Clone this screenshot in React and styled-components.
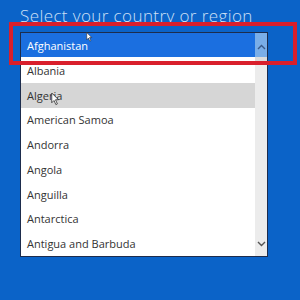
import React from "react";
import styled, { createGlobalStyle } from "styled-components";

const Global = createGlobalStyle`
  html, body { margin: 0; padding: 0; }
  body { background: #0b63c8; }
`;

const countries = [
  "Albania",
  "Algeria",
  "American Samoa",
  "Andorra",
  "Angola",
  "Anguilla",
  "Antarctica",
  "Antigua and Barbuda",
];

const pointer = "M1 1 L1 14 L4 11 L6.5 16.5 L8.5 15.5 L6 10 L10 10 Z";

const App = () => {
  return (
    <Page>
      <Global />
      <Title>Select your country or region</Title>
      <ListBox>
        <Rows>
          <Selected>Afghanistan</Selected>
          <Gap />
          {countries.map((c) => (
            <Row key={c} hover={c === "Algeria"}>
              {c}
              {c === "Algeria" && (
                <Cursor viewBox="0 0 12 18" width="9" height="14">
                  <path d={pointer} fill="#fff" stroke="#222" strokeWidth="1" />
                </Cursor>
              )}
            </Row>
          ))}
        </Rows>
        <ScrollBar>
          <ScrollTop>
            <svg width="9" height="6" viewBox="0 0 9 6">
              <path d="M1 5 L4.5 1.5 L8 5" fill="none" stroke="#3a5a8a" strokeWidth="1.4" />
            </svg>
          </ScrollTop>
          <Track />
          <ScrollBottom>
            <svg width="9" height="6" viewBox="0 0 9 6">
              <path d="M1 1 L4.5 4.5 L8 1" fill="none" stroke="#555" strokeWidth="1.4" />
            </svg>
          </ScrollBottom>
        </ScrollBar>
      </ListBox>
      <Highlight />
      <TopCursor viewBox="0 0 12 18" width="7" height="10">
        <path d={pointer} fill="#fff" stroke="#222" strokeWidth="1" />
      </TopCursor>
    </Page>
  );
};

export default App;

const Page = styled.div`
  position: relative;
  width: 300px;
  height: 300px;
  overflow: hidden;
  background: #0b63c8;
  padding-left: 20px;
  box-sizing: border-box;
  font-family: "Open Sans", "Noto Sans", sans-serif;
`;

const Title = styled.div`
  height: 25px;
  padding-top: 7px;
  font-size: 17px;
  letter-spacing: 0.4px;
  font-weight: 300;
  color: #cfe0f6;
  line-height: 17px;
  white-space: nowrap;
`;

const ListBox = styled.div`
  display: flex;
  width: 248px;
  height: 225px;
  box-sizing: border-box;
  border: 1px solid #1d2c4c;
  background: #fff;
  overflow: hidden;
`;

const Rows = styled.div`
  flex: 1;
  display: flex;
  flex-direction: column;
`;

const Selected = styled.div`
  height: 24px;
  flex-shrink: 0;
  background: #1b6fe0;
  color: #fff;
  font-size: 11px;
  display: flex;
  align-items: center;
  padding-left: 6px;
`;

const Gap = styled.div`
  height: 1px;
  flex-shrink: 0;
`;

const Row = styled.div`
  position: relative;
  height: 24.75px;
  flex-shrink: 0;
  background: ${(p) => (p.hover ? "#d6d6d6" : "#fff")};
  color: #333;
  font-size: 11px;
  display: flex;
  align-items: center;
  padding-left: 6px;
`;

const Cursor = styled.svg`
  position: absolute;
  left: 30px;
  top: 9px;
`;

const ScrollBar = styled.div`
  width: 12px;
  display: flex;
  flex-direction: column;
  background: #ececec;
`;

const ScrollTop = styled.div`
  height: 24px;
  background: #7aaee8;
  display: flex;
  align-items: center;
  justify-content: center;
  padding-top: 4px;
  box-sizing: border-box;
`;

const Track = styled.div`
  flex: 1;
  background: linear-gradient(#dcdcdc 0 8px, #ececec 8px);
`;

const ScrollBottom = styled.div`
  height: 24px;
  display: flex;
  align-items: center;
  justify-content: center;
`;

const Highlight = styled.div`
  position: absolute;
  left: 9px;
  top: 22px;
  width: 288px;
  height: 43px;
  box-sizing: border-box;
  border: 4px solid #d91f2c;
`;

const TopCursor = styled.svg`
  position: absolute;
  left: 86px;
  top: 32px;
`;
